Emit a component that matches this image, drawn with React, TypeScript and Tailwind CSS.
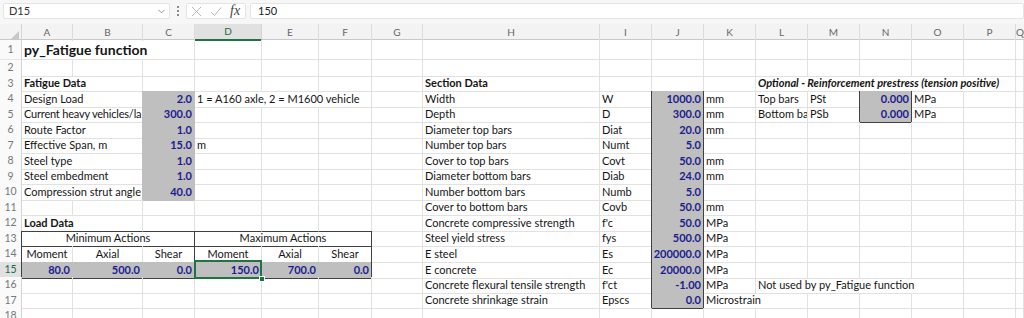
import { ChevronDown } from 'lucide-react'

type Spec = { t: string; k?: 'num' | 'b' | 'title' | 'bi' | 'c' | 'tight'; span?: number }

const COLS =
  'grid grid-cols-[22px_51px_70px_52px_67px_57px_53px_51px_177px_52px_52px_52px_52px_52px_52px_52px_52px_1fr]'

const LETTERS = ['A', 'B', 'C', 'D', 'E', 'F', 'G', 'H', 'I', 'J', 'K', 'L', 'M', 'N', 'O', 'P', 'Q']

const SPAN: Record<number, string> = {
  1: '',
  2: 'col-span-2',
  3: 'col-span-3',
  4: 'col-span-4',
  5: 'col-span-5',
}

// row -> column (1 = A) -> cell
const DATA: Record<number, Record<number, Spec>> = {
  1: { 1: { t: 'py_Fatigue function', k: 'title', span: 3 } },
  3: {
    1: { t: 'Fatigue Data', k: 'b', span: 2 },
    8: { t: 'Section Data', k: 'b' },
    12: { t: 'Optional - Reinforcement prestress (tension positive)', k: 'bi', span: 5 },
  },
  4: {
    1: { t: 'Design Load', span: 2 },
    3: { t: '2.0', k: 'num' },
    4: { t: '1 = A160 axle, 2 = M1600 vehicle', span: 3 },
    8: { t: 'Width' },
    9: { t: 'W' },
    10: { t: '1000.0', k: 'num' },
    11: { t: 'mm' },
    12: { t: 'Top bars' },
    13: { t: 'PSt' },
    14: { t: '0.000', k: 'num' },
    15: { t: 'MPa' },
  },
  5: {
    1: { t: 'Current heavy vehicles/la', k: 'tight', span: 2 },
    3: { t: '300.0', k: 'num' },
    8: { t: 'Depth' },
    9: { t: 'D' },
    10: { t: '300.0', k: 'num' },
    11: { t: 'mm' },
    12: { t: 'Bottom ba' },
    13: { t: 'PSb' },
    14: { t: '0.000', k: 'num' },
    15: { t: 'MPa' },
  },
  6: {
    1: { t: 'Route Factor', span: 2 },
    3: { t: '1.0', k: 'num' },
    8: { t: 'Diameter top bars' },
    9: { t: 'Diat' },
    10: { t: '20.0', k: 'num' },
    11: { t: 'mm' },
  },
  7: {
    1: { t: 'Effective Span, m', span: 2 },
    3: { t: '15.0', k: 'num' },
    4: { t: 'm' },
    8: { t: 'Number top bars' },
    9: { t: 'Numt' },
    10: { t: '5.0', k: 'num' },
  },
  8: {
    1: { t: 'Steel type', span: 2 },
    3: { t: '1.0', k: 'num' },
    8: { t: 'Cover to top bars' },
    9: { t: 'Covt' },
    10: { t: '50.0', k: 'num' },
    11: { t: 'mm' },
  },
  9: {
    1: { t: 'Steel embedment', span: 2 },
    3: { t: '1.0', k: 'num' },
    8: { t: 'Diameter bottom bars' },
    9: { t: 'Diab' },
    10: { t: '24.0', k: 'num' },
    11: { t: 'mm' },
  },
  10: {
    1: { t: 'Compression strut angle', span: 2 },
    3: { t: '40.0', k: 'num' },
    8: { t: 'Number bottom bars' },
    9: { t: 'Numb' },
    10: { t: '5.0', k: 'num' },
  },
  11: {
    8: { t: 'Cover to bottom bars' },
    9: { t: 'Covb' },
    10: { t: '50.0', k: 'num' },
    11: { t: 'mm' },
  },
  12: {
    1: { t: 'Load Data', k: 'b', span: 2 },
    8: { t: 'Concrete compressive strength' },
    9: { t: "f'c" },
    10: { t: '50.0', k: 'num' },
    11: { t: 'MPa' },
  },
  13: {
    1: { t: 'Minimum Actions', k: 'c', span: 3 },
    4: { t: 'Maximum Actions', k: 'c', span: 3 },
    8: { t: 'Steel yield stress' },
    9: { t: 'fys' },
    10: { t: '500.0', k: 'num' },
    11: { t: 'MPa' },
  },
  14: {
    1: { t: 'Moment', k: 'c' },
    2: { t: 'Axial', k: 'c' },
    3: { t: 'Shear', k: 'c' },
    4: { t: 'Moment', k: 'c' },
    5: { t: 'Axial', k: 'c' },
    6: { t: 'Shear', k: 'c' },
    8: { t: 'E steel' },
    9: { t: 'Es' },
    10: { t: '200000.0', k: 'num' },
    11: { t: 'MPa' },
  },
  15: {
    1: { t: '80.0', k: 'num' },
    2: { t: '500.0', k: 'num' },
    3: { t: '0.0', k: 'num' },
    4: { t: '150.0', k: 'num' },
    5: { t: '700.0', k: 'num' },
    6: { t: '0.0', k: 'num' },
    8: { t: 'E concrete' },
    9: { t: 'Ec' },
    10: { t: '20000.0', k: 'num' },
    11: { t: 'MPa' },
  },
  16: {
    8: { t: 'Concrete flexural tensile strength' },
    9: { t: "f'ct" },
    10: { t: '-1.00', k: 'num' },
    11: { t: 'MPa' },
    12: { t: 'Not used by py_Fatigue function', span: 4 },
  },
  17: {
    8: { t: 'Concrete shrinkage strain' },
    9: { t: 'Epscs' },
    10: { t: '0.0', k: 'num' },
    11: { t: 'Microstrain', span: 2 },
  },
}

function isGrey(r: number, c: number) {
  if (c === 3 && r >= 4 && r <= 10) return true
  if (c === 10 && r >= 4 && r <= 17) return true
  if (c === 14 && r >= 4 && r <= 5) return true
  if (r === 15 && c >= 1 && c <= 6) return true
  return false
}

function darkRight(r: number, c: number) {
  if ((c === 9 || c === 10) && r >= 4 && r <= 17) return true
  if ((c === 13 || c === 14) && r >= 4 && r <= 5) return true
  if ((c === 3 || c === 6) && r >= 13 && r <= 15) return true
  return false
}

function darkBottom(r: number, c: number) {
  if (c === 10 && (r === 3 || r === 17)) return true
  if (c === 14 && (r === 3 || r === 5)) return true
  if (c >= 1 && c <= 6 && r >= 12 && r <= 15) return true
  return false
}

const KIND: Record<string, string> = {
  num: 'justify-end pr-[2px] font-bold text-[#1c1c8e]',
  b: 'pl-[2px] font-bold',
  title: 'pl-[2px] font-bold text-[14px]',
  bi: 'pl-[2px] font-bold italic',
  c: 'justify-center',
  tight: 'pl-[2px] tracking-[-0.2px]',
  d: 'pl-[2px]',
}

function Row({ r }: { r: number }) {
  const specs = DATA[r] ?? {}
  const cells = []
  let c = 1
  while (c <= 17) {
    const s = specs[c]
    const span = s?.span ?? 1
    const last = c + span - 1
    const grey = isGrey(r, c)
    const right = darkRight(r, last)
      ? 'border-r-[#404040]'
      : grey || isGrey(r, last + 1)
        ? 'border-r-[#bfbfbf]'
        : 'border-r-[#e1e1e1]'
    const bottom = darkBottom(r, c)
      ? 'border-b-[#404040]'
      : grey || isGrey(r + 1, c)
        ? 'border-b-[#bfbfbf]'
        : 'border-b-[#e1e1e1]'
    const sel = r === 15 && c === 4
    cells.push(
      <div
        key={c}
        className={`${SPAN[span]} ${right} ${bottom} ${grey ? 'bg-[#bfbfbf]' : ''} ${
          KIND[s?.k ?? 'd']
        } ${sel ? 'relative overflow-visible' : 'overflow-hidden'} flex items-center whitespace-nowrap border-r border-b text-[#151515]`}
      >
        {s && <span className={s.k === 'num' ? 'text-[#1c1c8e]' : ''}>{s.t}</span>}
        {sel && (
          <>
            <div className="absolute -left-px -top-[2px] -right-px -bottom-px border-2 border-[#217346]" />
            <div className="absolute -right-[4px] -bottom-[4px] h-[6px] w-[6px] border border-white bg-[#217346]" />
          </>
        )}
      </div>,
    )
    c += span
  }
  const active = r === 15
  const tableEdge = r >= 13 && r <= 15
  return (
    <div className={`${COLS} ${r === 1 ? 'h-[20px]' : 'h-[15.5px]'}`}>
      <div
        className={`flex items-center justify-center border-b border-r text-[10.5px] ${
          active ? 'bg-[#e1e1e1] text-[#1e6b3f]' : 'bg-[#fafafa] text-[#777]'
        } ${tableEdge ? 'border-r-[#404040]' : 'border-r-[#d4d4d4]'} border-b-[#e6e6e6]`}
      >
        {r}
      </div>
      {cells}
    </div>
  )
}

export default function App() {
  const rows = Array.from({ length: 18 }, (_, i) => i + 1)
  return (
    <div className="h-[318px] w-[1024px] overflow-hidden bg-white font-['Lato',sans-serif] text-[11px]">
      {/* formula bar */}
      <div className="flex h-[24px] items-start gap-[4px] bg-[#f7f7f7] pt-[3px] pl-[3px]">
        <div className="flex h-[16px] w-[167px] items-center justify-between rounded-[2px] border border-[#e4e4e4] bg-white pl-[5px] pr-[2px] text-[#333]">
          <span>D15</span>
          <ChevronDown size={11} strokeWidth={1.5} className="text-[#666]" />
        </div>
        <div className="flex h-[16px] w-[8px] flex-col items-center justify-center gap-[2px]">
          <span className="h-[2px] w-[2px] rounded-full bg-[#666]" />
          <span className="h-[2px] w-[2px] rounded-full bg-[#666]" />
          <span className="h-[2px] w-[2px] rounded-full bg-[#666]" />
        </div>
        <div className="flex h-[16px] w-[60px] items-center gap-[8px] rounded-[2px] border border-[#e4e4e4] bg-white pl-[4px]">
          <svg width="11" height="11" viewBox="0 0 11 11" className="text-[#b8b8b8]">
            <path d="M1 1L10 10M10 1L1 10" stroke="currentColor" strokeWidth="1" fill="none" />
          </svg>
          <svg width="12" height="11" viewBox="0 0 12 11" className="text-[#b8b8b8]">
            <path d="M1 6L4.5 9.5L11 1.5" stroke="currentColor" strokeWidth="1" fill="none" />
          </svg>
          <span className="font-['Liberation_Serif',serif] text-[14px] italic leading-none text-[#444]">fx</span>
        </div>
        <div className="flex h-[16px] flex-1 items-center rounded-[2px] border border-[#e4e4e4] bg-white pl-[7px] text-[#222]">
          150
        </div>
      </div>

      {/* column headers */}
      <div className={`${COLS} h-[16px] border-b border-[#c8c8c8] bg-[#f3f3f3]`}>
        <div className="relative border-r border-[#d4d4d4]">
          <svg width="8" height="8" viewBox="0 0 8 8" className="absolute right-[2px] bottom-[2px]">
            <path d="M8 0L8 8L0 8Z" fill="#c8c8c8" />
          </svg>
        </div>
        {LETTERS.map((l) => (
          <div
            key={l}
            className={`flex items-center justify-center border-r text-[10px] ${
              l === 'D'
                ? 'border-b-2 border-r-[#d4d4d4] border-b-[#217346] bg-[#e1e1e1] text-[#1e6b3f]'
                : 'border-r-[#dcdcdc] text-[#666]'
            }`}
          >
            {l}
          </div>
        ))}
      </div>

      {rows.map((r) => (
        <Row key={r} r={r} />
      ))}
    </div>
  )
}
